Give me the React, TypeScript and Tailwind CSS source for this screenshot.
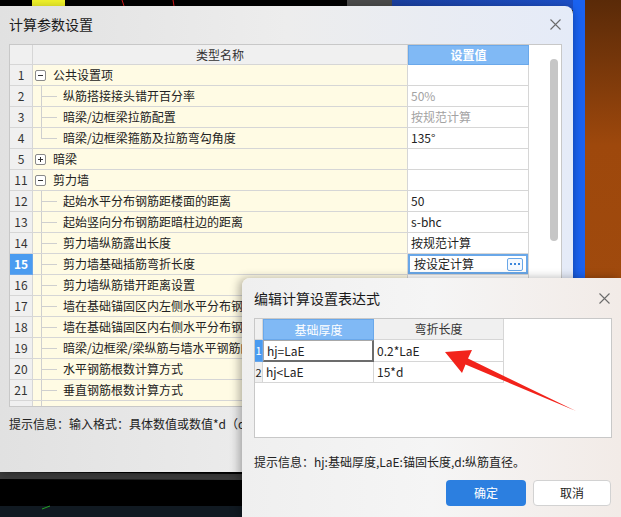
import React from 'react';

type Row = {
  n: number | null;
  kind: 'group' | 'child';
  open?: boolean;
  label: string;
  value?: string;
  gray?: boolean;
  last?: boolean;
  selected?: boolean;
};

const rows: Row[] = [
  { n: 1, kind: 'group', open: true, label: '公共设置项' },
  { n: 2, kind: 'child', label: '纵筋搭接接头错开百分率', value: '50%', gray: true },
  { n: 3, kind: 'child', label: '暗梁/边框梁拉筋配置', value: '按规范计算', gray: true },
  { n: 4, kind: 'child', label: '暗梁/边框梁箍筋及拉筋弯勾角度', value: '135°', last: true },
  { n: 5, kind: 'group', open: false, label: '暗梁' },
  { n: 11, kind: 'group', open: true, label: '剪力墙' },
  { n: 12, kind: 'child', label: '起始水平分布钢筋距楼面的距离', value: '50' },
  { n: 13, kind: 'child', label: '起始竖向分布钢筋距暗柱边的距离', value: 's-bhc' },
  { n: 14, kind: 'child', label: '剪力墙纵筋露出长度', value: '按规范计算' },
  { n: 15, kind: 'child', label: '剪力墙基础插筋弯折长度', value: '按设定计算', selected: true },
  { n: 16, kind: 'child', label: '剪力墙纵筋错开距离设置' },
  { n: 17, kind: 'child', label: '墙在基础锚固区内左侧水平分布钢筋根数' },
  { n: 18, kind: 'child', label: '墙在基础锚固区内右侧水平分布钢筋根数' },
  { n: 19, kind: 'child', label: '暗梁/边框梁/梁纵筋与墙水平钢筋的关系' },
  { n: 20, kind: 'child', label: '水平钢筋根数计算方式' },
  { n: 21, kind: 'child', label: '垂直钢筋根数计算方式' },
  { n: null, kind: 'child', label: '' },
];

function ToggleBox({ open }: { open?: boolean }) {
  return (
    <span className="relative flex h-[11px] w-[11px] shrink-0 items-center justify-center rounded-[2px] border border-[#8a8a8a] bg-white">
      <span className="h-px w-[5px] bg-[#333]" />
      {!open && <span className="absolute h-[5px] w-px bg-[#333]" />}
    </span>
  );
}

function CloseIcon() {
  return (
    <svg width="11" height="11" viewBox="0 0 11 11" className="shrink-0">
      <path d="M0.5 0.5 L10.5 10.5 M10.5 0.5 L0.5 10.5" stroke="#6b6b6b" strokeWidth="1.1" fill="none" />
    </svg>
  );
}

function TableRow({ r }: { r: Row }) {
  return (
    <div className="flex h-[21px] shrink-0">
      <div
        className={
          r.selected
            ? 'flex w-[23px] shrink-0 items-center justify-center border-r border-b border-[#6aa6ea] bg-[#4a9bf0] text-[12px] font-bold text-white'
            : 'flex w-[23px] shrink-0 items-center justify-center border-r border-b border-[#d6d6d6] bg-[#f0f0f0] text-[12px] text-[#333]'
        }
      >
        {r.n}
      </div>
      <div className="relative flex w-[375px] shrink-0 items-center overflow-hidden whitespace-nowrap border-r border-b border-[#d6d6d6] bg-[#fffbe4] text-[12px] text-[#222]">
        {r.kind === 'group' ? (
          <div className="flex items-center gap-[7px] pl-[2px]">
            <ToggleBox open={r.open} />
            <span>{r.label}</span>
          </div>
        ) : (
          <>
            <span className={r.last ? 'absolute left-[8px] top-0 h-[10px] w-px bg-[#cfcfcf]' : 'absolute left-[8px] top-0 h-full w-px bg-[#cfcfcf]'} />
            <span className="absolute left-[8px] top-[10px] h-px w-[16px] bg-[#cfcfcf]" />
            <span className="pl-[30px]">{r.label}</span>
          </>
        )}
      </div>
      <div className="flex w-[121px] shrink-0 items-center border-r border-b border-[#d6d6d6] bg-white text-[12px]">
        {r.selected ? (
          <div className="flex h-full w-full items-center justify-between border-2 border-[#69a7e8] pl-[4px] pr-[3px] text-[#222]">
            <span>{r.value}</span>
            <span className="flex h-[13px] w-[16px] items-center justify-center gap-[2px] rounded-[2px] border border-[#69a7e8] bg-[#f4f9ff]">
              <span className="h-[2px] w-[2px] bg-[#3a86dc]" />
              <span className="h-[2px] w-[2px] bg-[#3a86dc]" />
              <span className="h-[2px] w-[2px] bg-[#3a86dc]" />
            </span>
          </div>
        ) : (
          <span className={r.gray ? 'pl-[3px] text-[#a3a3a3]' : 'pl-[3px] text-[#222]'}>{r.value}</span>
        )}
      </div>
    </div>
  );
}

export default function App() {
  return (
    <div className="relative h-[517px] w-[621px] overflow-hidden bg-black font-['Noto_Sans_CJK_SC','Noto_Sans',sans-serif]">
      {/* desktop background */}
      <div className="absolute left-[32px] top-0 h-[6px] w-[33px] bg-[#eef02a]" />
      <div className="absolute left-[347px] top-0 h-[8px] w-[45px] bg-[#4a4a4a]" />
      <div className="absolute left-[392px] top-0 h-[10px] w-[192px] bg-gradient-to-r from-[#1a3f9e] to-[#1c4fc8]" />
      <div className="absolute left-[573px] top-0 h-[290px] w-[12px] bg-[#1a62f0]" />
      <div className="absolute left-[585px] top-0 h-[290px] w-[36px] bg-gradient-to-b from-[#5a2a08] via-[#9e480c] to-[#a04a0d]" />
      <div className="absolute left-0 top-[506px] h-[11px] w-[260px] bg-[#111a22]" />
      <svg className="absolute left-0 top-0" width="621" height="517" viewBox="0 0 621 517">
        <path d="M124 6 L122 0" stroke="#d01818" strokeWidth="1" />
        <path d="M174 6 L173 0" stroke="#d01818" strokeWidth="1" />
        <polygon points="0,472 242,474 242,480 0,479" fill="#3d3d3d" />
        <path d="M42 509 L50 506" stroke="#22a022" strokeWidth="1" />
      </svg>

      {/* main dialog */}
      <div className="absolute left-0 top-[6px] flex h-[466px] w-[573px] flex-col rounded-tr-[8px] bg-gradient-to-r from-[#e1e1e1] via-[#ededed] to-[#e5ebf8] shadow-[0_2px_8px_rgba(0,0,0,0.35)]">
        <div className="flex h-[38px] shrink-0 items-center justify-between pb-[1px] pl-[9px] pr-[12px]">
          <span className="text-[14px] text-[#1a1a1a]">计算参数设置</span>
          <CloseIcon />
        </div>
        <div className="ml-[9px] flex h-[363px] w-[553px] overflow-hidden border border-[#c8c8c8] bg-white">
          <div className="flex w-[519px] shrink-0 flex-col">
            <div className="flex h-[20px] shrink-0">
              <div className="w-[23px] shrink-0 border-r border-b border-[#d6d6d6] bg-[#f0f0f0]" />
              <div className="flex w-[375px] shrink-0 items-center justify-center border-r border-b border-[#d6d6d6] bg-[#f0f0f0] text-[12px] text-[#333]">
                类型名称
              </div>
              <div className="flex w-[121px] shrink-0 items-center justify-center border border-[#6aa8ea] bg-[#80b9f5] text-[12px] font-semibold text-white">
                设置值
              </div>
            </div>
            {rows.map((r, i) => (
              <TableRow key={i} r={r} />
            ))}
          </div>
          <div className="flex-1 bg-white pl-[21px] pt-[14px]">
            <div className="h-[182px] w-[8px] rounded-full bg-[#c6c6c6]" />
          </div>
        </div>
        <div className="mt-[8px] whitespace-nowrap pl-[9px] text-[12px] leading-[17px] text-[#222]">
          提示信息：输入格式：具体数值或数值*d（d为纵筋直径）
        </div>
      </div>

      {/* sub dialog */}
      <div className="absolute left-[242px] top-[278px] flex h-[239px] w-[379px] flex-col rounded-tl-[8px] bg-gradient-to-r from-[#efefef] via-[#f5f5f5] to-[#f2ebe7] shadow-[-3px_0_10px_rgba(0,0,0,0.3)]">
        <div className="flex h-[40px] shrink-0 items-center justify-between pl-[12px] pr-[11px]">
          <span className="text-[14px] text-[#1a1a1a]">编辑计算设置表达式</span>
          <CloseIcon />
        </div>
        <div className="ml-[12px] flex h-[120px] w-[358px] flex-col overflow-hidden border border-[#c8c8c8] bg-white text-[12px]">
          <div className="flex h-[21px] shrink-0">
            <div className="w-[8px] shrink-0 border-r border-b border-[#d6d6d6] bg-[#f0f0f0]" />
            <div className="flex w-[111px] shrink-0 items-center justify-center border border-[#6aa8ea] bg-[#80b9f5] text-white">
              基础厚度
            </div>
            <div className="flex w-[130px] shrink-0 items-center justify-center border-r border-b border-[#d6d6d6] bg-[#f0f0f0] text-[#333]">
              弯折长度
            </div>
          </div>
          <div className="flex h-[22px] shrink-0">
            <div className="flex w-[8px] shrink-0 items-center justify-center border-r border-b border-[#6aa6ea] bg-[#4a9bf0] text-[11px] text-white">
              1
            </div>
            <div className="flex w-[111px] shrink-0 items-center border-t border-l border-r-2 border-b-2 border-t-[#a8a8a8] border-l-[#a8a8a8] border-r-[#6c6c6c] border-b-[#6c6c6c] pl-[3px] text-[#222]">
              hj=LaE
            </div>
            <div className="flex w-[130px] shrink-0 items-center border-r border-b border-[#d6d6d6] pl-[3px] text-[#222]">
              0.2*LaE
            </div>
          </div>
          <div className="flex h-[21px] shrink-0">
            <div className="flex w-[8px] shrink-0 items-center justify-center border-r border-b border-[#d6d6d6] bg-[#f0f0f0] text-[11px] text-[#222]">
              2
            </div>
            <div className="flex w-[111px] shrink-0 items-center border-r border-b border-[#d6d6d6] pl-[3px] text-[#222]">
              hj&lt;LaE
            </div>
            <div className="flex w-[130px] shrink-0 items-center border-r border-b border-[#d6d6d6] pl-[3px] text-[#222]">
              15*d
            </div>
          </div>
        </div>
        <div className="mt-[15px] whitespace-nowrap pl-[12px] text-[12px] leading-[17px] text-[#222]">
          提示信息：hj:基础厚度,LaE:锚固长度,d:纵筋直径。
        </div>
        <div className="mt-[10px] flex justify-end gap-[7px] pr-[10px]">
          <div className="flex h-[26px] w-[80px] items-center justify-center rounded-[4px] bg-[#2c7fe0] text-[12px] text-white">
            确定
          </div>
          <div className="flex h-[26px] w-[78px] items-center justify-center rounded-[4px] border border-[#d2d2d2] bg-white text-[12px] text-[#222]">
            取消
          </div>
        </div>
      </div>

      {/* red annotation arrow */}
      <svg className="pointer-events-none absolute left-0 top-0" width="621" height="517" viewBox="0 0 621 517">
        <polygon points="445,352 472,350 468,358.5 576,411 465.5,364.5 462,373" fill="#f2231b" />
      </svg>
    </div>
  );
}
